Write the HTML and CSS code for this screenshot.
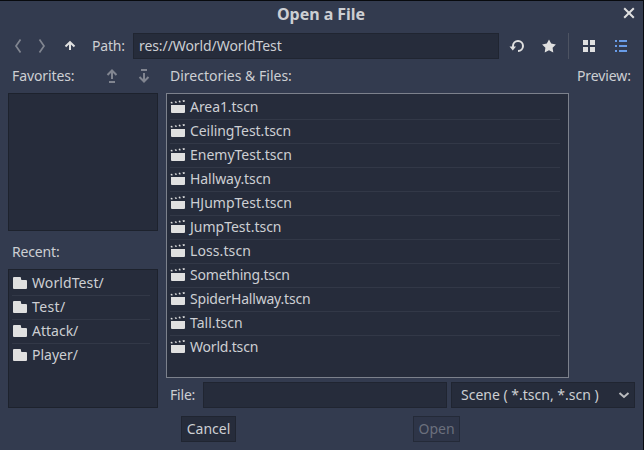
FILE: index.html
```html
<!DOCTYPE html>
<html lang="en">
<head>
<meta charset="utf-8">
<title>Open a File</title>
<link rel="stylesheet" href="styles.css">
</head>
<body>
<svg width="0" height="0" class="defs">
  <symbol id="folder" viewBox="0 0 16 16"><path d="M2 2a1 1 0 0 0-1 1v10a1 1 0 0 0 1 1h12a1 1 0 0 0 1-1V6a1 1 0 0 0-1-1h-4a1 1 0 0 1-1-1V3a1 1 0 0 0-1-1z"/></symbol>
  <symbol id="scene" viewBox="0 0 16 16"><path d="M1 6h14v7a1 1 0 0 1-1 1H2a1 1 0 0 1-1-1zM.6 3l1.400-.2.900 1.500-1.900.3zM4.700 2.400l1.500-.2.800 1.500-1.500.2zM8.500 1.900l1.500-.3.800 1.600-1.500.2zM12.400 1.400l2.100-.4.300 1.700-1.600.2z"/></symbol>
</svg>
<main class="dialog">
  <header class="title"><h1>Open a File</h1>
    <svg class="close" width="12" height="12" viewBox="0 0 12 12"><path d="M1.200 1.200l9.600 9.600M10.800 1.200L1.200 10.800"/></svg>
  </header>
  <div class="toolbar">
    <svg class="dim line" width="16" height="16" viewBox="0 0 16 16"><path d="M10.500 1.500L6 8l4.500 6.500"/></svg>
    <svg class="dim line next" width="16" height="16" viewBox="0 0 16 16"><path d="M5.500 1.500L10 8l-4.500 6.500"/></svg>
    <svg class="line up" width="16" height="16" viewBox="0 0 16 16"><path d="M8 12V4.500M3.500 8.500L8 4.200l4.500 4.300"/></svg>
    <span class="path-label">Path:</span>
    <div class="field path">res://World/WorldTest</div>
    <svg class="line reload" width="16" height="16" viewBox="0 0 16 16"><path d="M4 9V8a5 5 0 1 1 5 5"/><path class="solid" d="M.5 8.500h6.500l-3.200 4z"/></svg>
    <svg class="star" width="16" height="16" viewBox="0 0 16 16"><path d="M8 1.400l2.200 4.200 4.700.8-3.300 3.300.7 4.700L8 12.300l-4.300 2.100.7-4.700L1.100 6.400l4.700-.8z"/></svg>
    <i class="rule"></i>
    <svg class="grid" width="16" height="16" viewBox="0 0 16 16"><path d="M2 2h5v5H2zM9 2h5v5H9zM2 9h5v5H2zM9 9h5v5H9z"/></svg>
    <svg class="list-icon" width="16" height="16" viewBox="0 0 16 16"><path d="M2 2h2v2H2zM6 2h8v2H6zM2 7h2v2H2zM6 7h8v2H6zM2 12h2v2H2zM6 12h8v2H6z"/></svg>
  </div>
  <div class="content">
    <aside class="side">
      <div class="heading"><span class="favorites">Favorites:</span>
        <svg class="dim line" width="16" height="16" viewBox="0 0 16 16"><path d="M8 11V3M3.500 7L8 2.500 12.500 7M5 14h6"/></svg>
        <svg class="dim line down" width="16" height="16" viewBox="0 0 16 16"><path d="M8 5v8M3.500 9L8 13.500 12.500 9M5 2h6"/></svg>
      </div>
      <div class="panel fav-panel"></div>
      <div class="recent-label">Recent:</div>
      <ul class="panel recent">
        <li><svg><use href="#folder"/></svg><span class="wide">WorldTest/</span></li>
        <li><svg><use href="#folder"/></svg><span class="wider">Test/</span></li>
        <li><svg><use href="#folder"/></svg><span>Attack/</span></li>
        <li><svg><use href="#folder"/></svg><span>Player/</span></li>
      </ul>
    </aside>
    <section class="main">
      <div class="upper">
        <div class="files-col">
          <div class="heading files-heading">Directories &amp; Files:</div>
          <ul class="panel files">
            <li><svg><use href="#scene"/></svg><span class="snug">Area1.tscn</span></li>
            <li><svg><use href="#scene"/></svg><span class="snug">CeilingTest.tscn</span></li>
            <li><svg><use href="#scene"/></svg><span>EnemyTest.tscn</span></li>
            <li><svg><use href="#scene"/></svg><span class="snug">Hallway.tscn</span></li>
            <li><svg><use href="#scene"/></svg><span>HJumpTest.tscn</span></li>
            <li><svg><use href="#scene"/></svg><span>JumpTest.tscn</span></li>
            <li><svg><use href="#scene"/></svg><span class="wide">Loss.tscn</span></li>
            <li><svg><use href="#scene"/></svg><span class="tight">Something.tscn</span></li>
            <li><svg><use href="#scene"/></svg><span class="tight">SpiderHallway.tscn</span></li>
            <li><svg><use href="#scene"/></svg><span>Tall.tscn</span></li>
            <li><svg><use href="#scene"/></svg><span class="tight">World.tscn</span></li>
          </ul>
        </div>
        <div class="heading preview">Preview:</div>
      </div>
      <div class="file-row">
        <span class="file-label">File:</span>
        <div class="field file"></div>
        <div class="field filter"><span>Scene ( *.tscn, *.scn )</span>
          <svg class="line" width="12" height="12" viewBox="0 0 12 12"><path d="M1.500 4L6 8l4.500-4"/></svg>
        </div>
      </div>
    </section>
  </div>
  <footer class="actions">
    <button class="cancel">Cancel</button>
    <button class="open" disabled>Open</button>
  </footer>
</main>
</body>
</html>
```
FILE: styles.css
```css
* { box-sizing: border-box; }
body {
  margin: 0;
  width: 644px;
  height: 450px;
  overflow: hidden;
  background: #080a0e;
  color: #cdcfd3;
  font: 14px/20px "Noto Sans", sans-serif;
}
.defs { position: absolute; }
.dialog {
  width: 643px;
  height: 449px;
  margin-top: 1px;
  background: #333b4f;
}
svg { display: block; flex: none; fill: #e0e0e0; }
.line { fill: none; stroke: #e0e0e0; stroke-width: 2; }
.dim { opacity: .45; }
.line .solid { fill: #e0e0e0; stroke: none; }
.title {
  height: 32px;
  display: flex;
  align-items: flex-start;
  padding-left: 277px;
}
h1 { margin: 3px 0 0; font-size: 16px; line-height: 20px; width: 100px; white-space: nowrap; letter-spacing: -.04px; }
.close { margin: 6px 8px 0 auto; fill: none; stroke: #e0e0e0; stroke-width: 2; }
.toolbar { height: 26px; display: flex; align-items: center; padding-left: 10px; }
.toolbar .dim { stroke-width: 1.7; }
.next { margin-left: 8px; }
.up { margin-left: 12px; }
.path-label { width: 41px; margin-left: 14px; letter-spacing: -.2px; }
.field {
  height: 26px;
  border: 1px solid #202531;
  background: #262c3b;
  line-height: 24px;
  white-space: nowrap;
}
.path { width: 366px; padding-left: 5px; letter-spacing: -.08px; }
.reload { margin-left: 10px; }
.star { margin-left: 16px; }
.rule { width: 1px; height: 26px; margin-left: 11px; background: #4d5362; }
.grid { margin-left: 12px; }
.list-icon { margin-left: 16px; fill: #699ce8; }
.content { display: flex; gap: 8px; margin: 4px 8px 0; height: 345px; }
.side { width: 150px; display: flex; flex-direction: column; }
.heading { height: 30px; padding: 3px 0 0 4px; display: flex; }
.favorites { width: 92px; letter-spacing: -.1px; }
.heading svg { margin-top: 2px; }
.down { margin-left: 16px; }
.panel { margin: 0; list-style: none; border: 1px solid #1d222d; background: #262c3b; padding: 2px 3px; }
.fav-panel { height: 138px; }
.recent-label { height: 38px; padding: 11px 0 0 4px; letter-spacing: -.15px; }
.recent { height: 139px; padding-right: 7px; }
li { height: 24px; display: flex; align-items: center; border-bottom: 1px solid #323847; }
li:last-child { border-color: transparent; }
li svg { width: 16px; height: 16px; margin-top: -1px; }
li span { margin-left: 4px; line-height: 20px; margin-top: -1px; }
.snug { letter-spacing: -.07px; }
.tight { letter-spacing: -.2px; }
.wide { letter-spacing: .1px; }
.wider { letter-spacing: .4px; }
.main { width: 469px; }
.upper { display: flex; gap: 8px; }
.files-col { width: 403px; }
.files { height: 285px; border-color: #7c818c; padding-right: 8px; }
.preview { padding-left: 0; letter-spacing: -.1px; }
.file-row { display: flex; margin-top: 4px; height: 26px; align-items: center; }
.file-label { width: 37px; padding-left: 4px; letter-spacing: -.2px; }
.file { width: 244px; }
.filter { width: 184px; margin-left: 4px; padding: 0 4px 0 9px; display: flex; align-items: center; justify-content: space-between; }
.filter svg { opacity: .8; }
.actions { display: flex; margin: 8px 0 0 181px; }
button {
  height: 26px;
  padding: 0;
  border: 1px solid #202531;
  background: #262c3b;
  color: #cdcfd3;
  font: inherit;
}
.cancel { width: 55px; }
.open { width: 47px; margin-left: 177px; background: #2e3548; color: #6b707d; border-color: #242a38; }
```
